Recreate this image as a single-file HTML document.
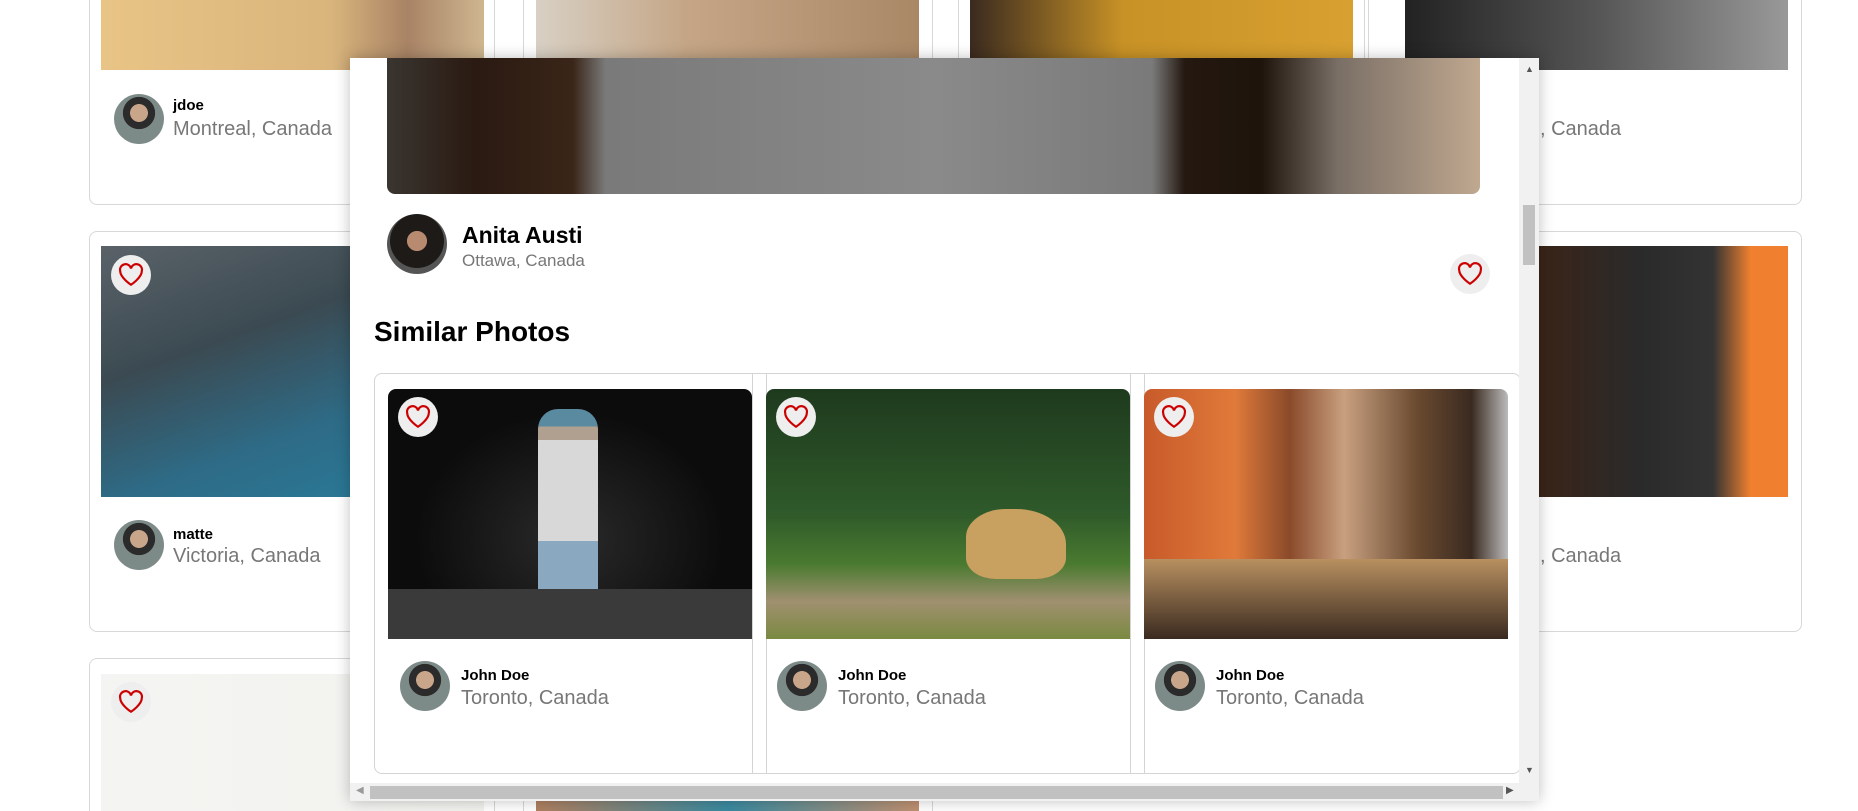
<!DOCTYPE html>
<html style="overflow:hidden;height:811px"><head><meta charset="utf-8"><style>
*{box-sizing:border-box;margin:0;padding:0}
html,body{width:1858px;height:811px;overflow:hidden}
body{background:#fff;font-family:"Liberation Sans",sans-serif;position:relative}
#wrap{position:absolute;left:0;top:0;width:1858px;height:811px;overflow:hidden}
.card{position:absolute;border:1px solid #d8d8d8;border-radius:8px;background:#fff}
.img{position:absolute}
.av{position:absolute;border-radius:50%;background:radial-gradient(circle at 50% 38%,#c9a58a 0 22%,#2b2b2b 23% 40%,#7d8b88 41%)}
.nm{position:absolute;font-weight:bold;font-size:15px;color:#000}
.loc{position:absolute;font-size:20px;color:#777}
.heart{position:absolute;width:40px;height:40px;border-radius:50%;background:#eee;display:flex;align-items:center;justify-content:center}
</style></head><body><div id="wrap">
<div class="card" style="left:89px;top:0;width:406px;height:205px;border-top:none;border-radius:0 0 8px 8px"></div>
<div class="img" style="left:101px;top:0;width:383px;height:70px;background:linear-gradient(90deg,#e9c486,#d9b57c 60%,#a88365 80%,#cfb690)"></div>
<div class="av" style="left:114px;top:94px;width:50px;height:50px"></div>
<div class="nm" style="left:173px;top:97px">jdoe</div>
<div class="loc" style="left:173px;top:118px">Montreal, Canada</div>
<div class="card" style="left:523px;top:0;width:410px;height:205px;border-top:none;border-radius:0 0 8px 8px"></div>
<div class="img" style="left:536px;top:0;width:383px;height:70px;background:linear-gradient(90deg,#d8d0c4,#c4a585 40%,#a98866)"></div>
<div class="card" style="left:958px;top:0;width:407px;height:205px;border-top:none;border-radius:0 0 8px 8px"></div>
<div class="img" style="left:970px;top:0;width:383px;height:70px;background:linear-gradient(90deg,#3a2a1f,#c89226 40%,#d8a030)"></div>
<div class="card" style="left:1368px;top:0;width:434px;height:205px;border-top:none;border-radius:0 0 8px 8px"></div>
<div class="img" style="left:1405px;top:0;width:383px;height:70px;background:linear-gradient(90deg,#222,#555 50%,#999)"></div>
<div class="loc" style="left:1540px;top:118px">, Canada</div>

<div class="card" style="left:89px;top:231px;width:406px;height:401px"></div>
<div class="img" style="left:101px;top:246px;width:260px;height:251px;background:linear-gradient(160deg,#5a6268,#3b4a52 40%,#2e6b86 75%,#2a7896)"></div>
<div class="heart" style="left:111px;top:255px"><svg width="26" height="24" viewBox="0 0 24 22"><path d="M12 20S2 13.5 2 7.2A4.9 4.9 0 0 1 12 5a4.9 4.9 0 0 1 10 2.2C22 13.5 12 20 12 20z" fill="none" stroke="#c00" stroke-width="2"/></svg></div>
<div class="av" style="left:114px;top:520px;width:50px;height:50px"></div>
<div class="nm" style="left:173px;top:526px">matte</div>
<div class="loc" style="left:173px;top:545px">Victoria, Canada</div>
<div class="card" style="left:1368px;top:231px;width:434px;height:401px"></div>
<div class="img" style="left:1539px;top:246px;width:249px;height:251px;background:linear-gradient(90deg,#3a2418,#2a2a2a 40%,#333 70%,#f08030 85%)"></div>
<div class="loc" style="left:1540px;top:545px">, Canada</div>
<div class="card" style="left:89px;top:658px;width:406px;height:153px;border-bottom:none;border-radius:8px 8px 0 0"></div>
<div class="img" style="left:101px;top:674px;width:383px;height:137px;background:linear-gradient(90deg,#f4f4f2,#f2f2ef)"></div>
<div class="heart" style="left:111px;top:682px"><svg width="26" height="24" viewBox="0 0 24 22"><path d="M12 20S2 13.5 2 7.2A4.9 4.9 0 0 1 12 5a4.9 4.9 0 0 1 10 2.2C22 13.5 12 20 12 20z" fill="none" stroke="#c00" stroke-width="2"/></svg></div>
<div class="card" style="left:523px;top:658px;width:410px;height:153px;border-bottom:none;border-radius:8px 8px 0 0"></div>
<div class="img" style="left:536px;top:800px;width:383px;height:11px;background:linear-gradient(90deg,#b08060,#3a8aa0 50%,#c09070)"></div>

<div style="position:absolute;left:350px;top:58px;width:1189px;height:743px;background:#fff;box-shadow:0 0 14px rgba(0,0,0,.25);overflow:hidden">
 <div style="position:absolute;left:37px;top:0;width:1093px;height:136px;border-radius:0 0 8px 8px;background:linear-gradient(90deg,#3a3530 0,#2a1a12 8%,#3a2518 17%,#7a7a7a 20%,#8a8a8a 50%,#7a7a7a 70%,#241810 73%,#1e140c 80%,#7a6f66 87%,#c0a890 100%)"></div>
 <div class="av" style="left:37px;top:156px;width:60px;height:60px;background:radial-gradient(circle at 50% 45%,#b88a70 0 22%,#1e1a18 23% 60%,#555 61%)"></div>
 <div style="position:absolute;left:112px;top:164px;font-size:23px;font-weight:bold">Anita Austi</div>
 <div style="position:absolute;left:112px;top:193px;font-size:17px;color:#777">Ottawa, Canada</div>
 <div class="heart" style="left:1100px;top:196px"><svg width="26" height="24" viewBox="0 0 24 22"><path d="M12 20S2 13.5 2 7.2A4.9 4.9 0 0 1 12 5a4.9 4.9 0 0 1 10 2.2C22 13.5 12 20 12 20z" fill="none" stroke="#c00" stroke-width="2"/></svg></div>
 <div style="position:absolute;left:24px;top:258px;font-size:28px;font-weight:bold">Similar Photos</div>
 <div style="position:absolute;left:24px;top:315px;width:1147px;height:401px;border:1px solid #d4d4d4;border-radius:8px"></div>
 <div style="position:absolute;left:402px;top:315px;width:0;height:401px;border-left:1px solid #d4d4d4"></div>
 <div style="position:absolute;left:416px;top:315px;width:0;height:401px;border-left:1px solid #d4d4d4"></div>
 <div style="position:absolute;left:780px;top:315px;width:0;height:401px;border-left:1px solid #d4d4d4"></div>
 <div style="position:absolute;left:794px;top:315px;width:0;height:401px;border-left:1px solid #d4d4d4"></div>
 <div style="position:absolute;left:38px;top:331px;width:364px;height:250px;border-radius:8px 8px 0 0;overflow:hidden;background:radial-gradient(ellipse at 50% 60%,#2a2a2a,#0c0c0c 60%),#111"><div style="position:absolute;left:150px;top:20px;width:60px;height:220px;background:linear-gradient(#5a8aa0 0 8%,#b0a090 8% 14%,#d8d8d8 14% 60%,#8aa8c0 60%);border-radius:20px"></div><div style="position:absolute;left:0;top:200px;width:364px;height:50px;background:#3a3a3a"></div></div>
 <div style="position:absolute;left:416px;top:331px;width:364px;height:250px;border-radius:8px 8px 0 0;overflow:hidden;background:linear-gradient(#1e3a1e,#2f5a2a 50%,#4a7a30 70%,#a09070 85%,#7a8a40)"><div style="position:absolute;left:200px;top:120px;width:100px;height:70px;border-radius:40% 50% 30% 30%;background:#c8a060"></div></div>
 <div style="position:absolute;left:794px;top:331px;width:364px;height:250px;border-radius:8px 8px 0 0;overflow:hidden;background:linear-gradient(90deg,#c85a2a,#e07a3a 25%,#8a4a2a 40%,#c8a080 55%,#6a4a30 75%,#3a2a20 90%,#bbb 100%)"><div style="position:absolute;left:0;top:170px;width:364px;height:80px;background:linear-gradient(#b89060,#3a2a20)"></div></div>
 <div class="heart" style="left:48px;top:339px"><svg width="26" height="24" viewBox="0 0 24 22"><path d="M12 20S2 13.5 2 7.2A4.9 4.9 0 0 1 12 5a4.9 4.9 0 0 1 10 2.2C22 13.5 12 20 12 20z" fill="none" stroke="#c00" stroke-width="2"/></svg></div>
 <div class="heart" style="left:426px;top:339px"><svg width="26" height="24" viewBox="0 0 24 22"><path d="M12 20S2 13.5 2 7.2A4.9 4.9 0 0 1 12 5a4.9 4.9 0 0 1 10 2.2C22 13.5 12 20 12 20z" fill="none" stroke="#c00" stroke-width="2"/></svg></div>
 <div class="heart" style="left:804px;top:339px"><svg width="26" height="24" viewBox="0 0 24 22"><path d="M12 20S2 13.5 2 7.2A4.9 4.9 0 0 1 12 5a4.9 4.9 0 0 1 10 2.2C22 13.5 12 20 12 20z" fill="none" stroke="#c00" stroke-width="2"/></svg></div>
 <div class="av" style="left:50px;top:603px;width:50px;height:50px"></div>
 <div class="nm" style="left:111px;top:609px">John Doe</div>
 <div class="loc" style="left:111px;top:629px">Toronto, Canada</div>
 <div class="av" style="left:427px;top:603px;width:50px;height:50px"></div>
 <div class="nm" style="left:488px;top:609px">John Doe</div>
 <div class="loc" style="left:488px;top:629px">Toronto, Canada</div>
 <div class="av" style="left:805px;top:603px;width:50px;height:50px"></div>
 <div class="nm" style="left:866px;top:609px">John Doe</div>
 <div class="loc" style="left:866px;top:629px">Toronto, Canada</div>
 <div style="position:absolute;left:1169px;top:0;width:20px;height:725px;background:#f1f1f1"></div>
 <div style="position:absolute;left:1173px;top:147px;width:12px;height:60px;background:#c1c1c1"></div>
 <div style="position:absolute;left:1175px;top:6px;font-size:9px;color:#555">▲</div>
 <div style="position:absolute;left:1175px;top:707px;font-size:9px;color:#555">▼</div>
 <div style="position:absolute;left:0;top:725px;width:1189px;height:18px;background:#f1f1f1"></div>
 <div style="position:absolute;left:20px;top:728px;width:1133px;height:13px;background:#c1c1c1"></div>
 <div style="position:absolute;left:6px;top:727px;font-size:10px;color:#999">◀</div>
 <div style="position:absolute;left:1156px;top:727px;font-size:10px;color:#555">▶</div>
</div>
</div></body></html>
